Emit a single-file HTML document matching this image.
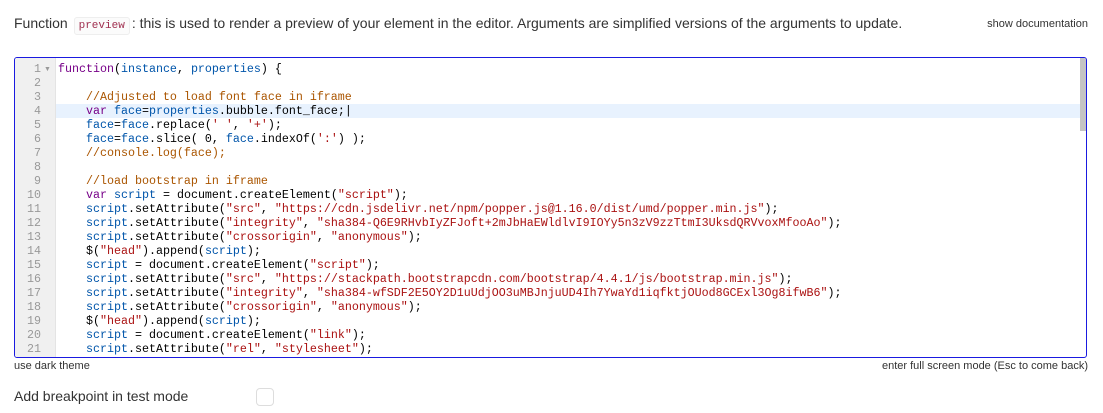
<!DOCTYPE html>
<html><head><meta charset="utf-8"><style>
body{margin:0;width:1103px;height:413px;background:#fff;font-family:"Liberation Sans",sans-serif;position:relative;overflow:hidden;color:#333}
.hdr{position:absolute;left:14px;top:15px;font-size:14px;color:#333}
.hdr code{font-family:"Liberation Mono",monospace;font-size:11px;color:#a03050;border:1px solid #eee;background:#fbfbfb;border-radius:3px;padding:2px 4px;margin:0 2px}
.doc{position:absolute;right:15px;top:18px;font-size:11px;color:#333}
.ed{position:absolute;left:14px;top:57px;width:1071px;height:299px;border:1px solid #1a1ae0;border-radius:3px;overflow:hidden;background:#fff}
.gut{position:absolute;left:0;top:0;width:40px;height:100%;background:#f0f0f0;border-right:1px solid #e4e4e4}
.ln{position:absolute;left:0;width:26px;text-align:right;font-family:"Liberation Mono",monospace;font-size:11.67px;color:#999;line-height:14px}
.code{position:absolute;left:43px;top:4px;font-family:"Liberation Mono",monospace;font-size:11.67px;line-height:14px;white-space:pre;color:#000}
.hl{position:absolute;left:41px;right:0;top:46px;height:14px;background:#e8f2fe}
.sb{position:absolute;right:0;top:0;width:6px;height:73px;background:#c4c4c4}
.k{color:#708}.v{color:#05a}.s{color:#a11}.c{color:#a50}
.f1{position:absolute;left:14px;top:360px;font-size:11px;color:#333}
.f2{position:absolute;right:15px;top:360px;font-size:11px;color:#333}
.bp{position:absolute;left:14px;top:388px;font-size:14px;color:#333}
.cb{position:absolute;left:256px;top:388px;width:16px;height:16px;border:1px solid #ddd;border-radius:4px}
</style></head><body>
<div class="hdr">Function <code>preview</code>: this is used to render a preview of your element in the editor. Arguments are simplified versions of the arguments to update.</div>
<div class="doc">show documentation</div>
<div class="ed">
<div class="gut"></div>
<div class="hl"></div>
<div class="ln" style="top:4px">1<br>2<br>3<br>4<br>5<br>6<br>7<br>8<br>9<br>10<br>11<br>12<br>13<br>14<br>15<br>16<br>17<br>18<br>19<br>20<br>21<br>22</div>
<div style="position:absolute;left:29px;top:8px;font-size:7px;color:#999">▼</div>
<div class="code"><span class="k">function</span>(<span class="v">instance</span>, <span class="v">properties</span>) {

    <span class="c">//Adjusted to load font face in iframe</span>
    <span class="k">var</span> <span class="v">face</span>=<span class="v">properties</span>.bubble.font_face;|
    <span class="v">face</span>=<span class="v">face</span>.replace(<span class="s">' '</span>, <span class="s">'+'</span>);
    <span class="v">face</span>=<span class="v">face</span>.slice( <span>0</span>, <span class="v">face</span>.indexOf(<span class="s">':'</span>) );
    <span class="c">//console.log(face);</span>

    <span class="c">//load bootstrap in iframe</span>
    <span class="k">var</span> <span class="v">script</span> = document.createElement(<span class="s">"script"</span>);
    <span class="v">script</span>.setAttribute(<span class="s">"src"</span>, <span class="s">"https://cdn.jsdelivr.net/npm/popper.js@1.16.0/dist/umd/popper.min.js"</span>);
    <span class="v">script</span>.setAttribute(<span class="s">"integrity"</span>, <span class="s">"sha384-Q6E9RHvbIyZFJoft+2mJbHaEWldlvI9IOYy5n3zV9zzTtmI3UksdQRVvoxMfooAo"</span>);
    <span class="v">script</span>.setAttribute(<span class="s">"crossorigin"</span>, <span class="s">"anonymous"</span>);
    $(<span class="s">"head"</span>).append(<span class="v">script</span>);
    <span class="v">script</span> = document.createElement(<span class="s">"script"</span>);
    <span class="v">script</span>.setAttribute(<span class="s">"src"</span>, <span class="s">"https://stackpath.bootstrapcdn.com/bootstrap/4.4.1/js/bootstrap.min.js"</span>);
    <span class="v">script</span>.setAttribute(<span class="s">"integrity"</span>, <span class="s">"sha384-wfSDF2E5OY2D1uUdjOO3uMBJnjuUD4Ih7YwaYd1iqfktjOUod8GCExl3Og8ifwB6"</span>);
    <span class="v">script</span>.setAttribute(<span class="s">"crossorigin"</span>, <span class="s">"anonymous"</span>);
    $(<span class="s">"head"</span>).append(<span class="v">script</span>);
    <span class="v">script</span> = document.createElement(<span class="s">"link"</span>);
    <span class="v">script</span>.setAttribute(<span class="s">"rel"</span>, <span class="s">"stylesheet"</span>);
    <span class="v">script</span>.setAttribute(<span class="s">"href"</span>, <span class="s">"https://stackpath.bootstrapcdn.com/bootstrap/4.4.1/css/bootstrap.min.css"</span>);</div>
<div class="sb"></div>
</div>
<div class="f1">use dark theme</div>
<div class="f2">enter full screen mode (Esc to come back)</div>
<div class="bp">Add breakpoint in test mode</div>
<div class="cb"></div>
</body></html>
